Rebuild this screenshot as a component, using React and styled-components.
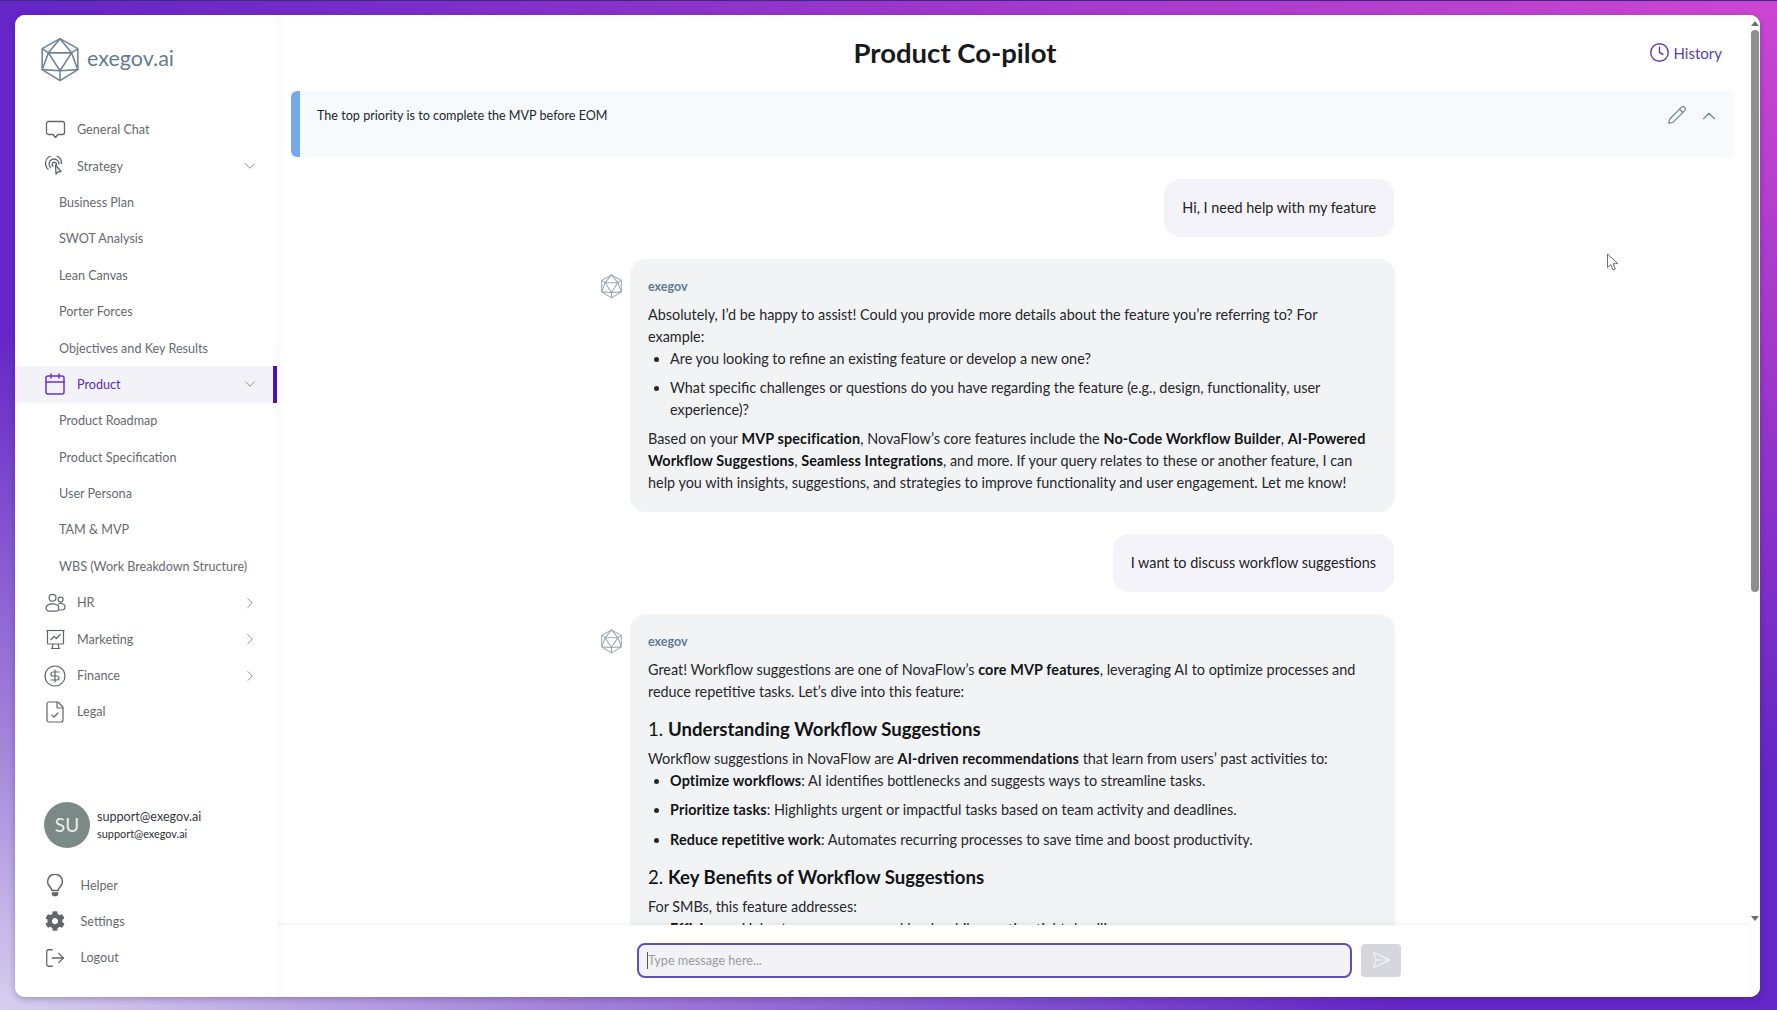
import React from 'react';
import styled, { createGlobalStyle } from 'styled-components';
import {
  ChevronDown, ChevronRight, ChevronUp, Clock, Pencil, SendHorizontal, Calendar,
  CircleDollarSign, FileCheck, LogOut,
} from 'lucide-react';
import { FaCog } from 'react-icons/fa';

const Global = createGlobalStyle`
  html, body { margin: 0; height: 100%; overflow: hidden; }
  body { font-family: Lato, "Open Sans", sans-serif; }
  * { box-sizing: border-box; }
`;

const Page = styled.div`
  width: 1777px;
  height: 1010px;
  padding: 14px 17px 13px 15px;
  background: #6426c6;
  position: relative;
  overflow: hidden;
  border-top: 1px solid #3a2a80;
  &::before {
    content: '';
    position: absolute;
    inset: 0;
    background: radial-gradient(ellipse 1750px 780px at 100% 0, #cc46d2 0%, rgba(190, 66, 205, 0.7) 42%, rgba(120, 40, 190, 0) 100%);
  }
  &::after {
    content: '';
    position: absolute;
    inset: 0;
    background: radial-gradient(ellipse 1400px 680px at 0 100%, #d6cfee 0%, rgba(190, 170, 225, 0.7) 40%, rgba(130, 90, 200, 0) 100%);
  }
`;

const Window = styled.div`
  position: relative;
  z-index: 1;
  height: 100%;
  display: flex;
  background: #fff;
  border-radius: 10px;
  overflow: hidden;
  box-shadow: 0 2px 6px rgba(40, 20, 90, 0.3);
`;

const Sidebar = styled.aside`
  width: 262px;
  flex-shrink: 0;
  display: flex;
  flex-direction: column;
  background: #fff;
  box-shadow: 2px 0 6px rgba(0, 0, 0, 0.04);
  z-index: 2;
`;

const Brand = styled.div`
  height: 96.5px;
  padding: 22px 0 0 24px;
  display: flex;
  align-items: flex-start;
  gap: 6px;
`;

const BrandName = styled.span`
  margin-top: 8px;
  font-size: 21.5px;
  color: #5f7c94;
`;

const Nav = styled.nav`
  display: flex;
  flex-direction: column;
  flex: 1;
`;

const NavRow = styled.div`
  height: 36.4px;
  display: flex;
  align-items: center;
  padding-left: ${(p) => (p.$sub ? '44px' : '28px')};
  padding-right: 18px;
  gap: ${(p) => (p.$foot ? '13.5px' : '10px')};
  font-size: 12.6px;
  color: ${(p) => (p.$active ? '#5a2bb8' : '#666a70')};
  background: ${(p) => (p.$active ? '#f3f2f9' : 'transparent')};
  box-shadow: ${(p) => (p.$active ? 'inset -4px 0 0 #4c12b0' : 'none')};
`;

const IconSlot = styled.span`
  width: 24px;
  height: 24px;
  flex-shrink: 0;
  display: flex;
  align-items: center;
  justify-content: center;
  color: #62666c;
`;

const NavLabel = styled.span`
  flex: 1;
  white-space: nowrap;
`;

const Profile = styled.div`
  display: flex;
  align-items: center;
  gap: 7px;
  padding: 0 0 0 29px;
  margin-bottom: 19px;
`;

const Avatar = styled.div`
  width: 46px;
  height: 46px;
  border-radius: 50%;
  background: #7c8a87;
  color: #e9eeec;
  font-size: 19px;
  display: flex;
  align-items: center;
  justify-content: center;
`;

const ProfileText = styled.div`
  display: flex;
  flex-direction: column;
  gap: 3px;
`;

const ProfileName = styled.span`
  font-size: 12.6px;
  color: #33373c;
`;

const ProfileMail = styled.span`
  font-size: 10.9px;
  color: #2b2f33;
`;

const FootLinks = styled.div`
  padding-bottom: 21px;
`;

const Main = styled.main`
  flex: 1;
  min-width: 0;
  display: flex;
  flex-direction: column;
`;

const Header = styled.header`
  height: 76px;
  flex-shrink: 0;
  position: relative;
  display: flex;
  justify-content: center;
  padding: 21px 116px 0 0;
`;

const Title = styled.h1`
  margin: 0;
  font-size: 27.5px;
  font-weight: 700;
  line-height: 34px;
  color: #17191c;
`;

const HistoryLink = styled.a`
  position: absolute;
  right: 27px;
  top: 27px;
  display: flex;
  align-items: center;
  gap: 4px;
  font-size: 15px;
  color: #5b3ea8;
`;

const Note = styled.div`
  flex-shrink: 0;
  height: 66px;
  margin: 0 16px 0 14px;
  padding: 15px 13px 0 17px;
  display: flex;
  justify-content: space-between;
  background: #f6fafd;
  border-left: 9px solid #75a9ee;
  border-radius: 6px 0 0 6px;
  font-size: 12.6px;
  color: #24272b;
`;

const NoteText = styled.span`
  line-height: 20px;
`;

const NoteTools = styled.div`
  display: flex;
  gap: 11px;
  height: 22px;
  margin-top: -1px;
  color: #6c8296;
`;

const Thread = styled.div`
  flex: 1;
  min-height: 0;
  overflow: hidden;
  display: flex;
  flex-direction: column;
  gap: 22px;
  padding: 22px 0 0 323px;
`;

const UserBubble = styled.div`
  align-self: flex-start;
  margin-left: auto;
  margin-right: 355px;
  padding: 18px 18px;
  border-radius: 16px;
  background: #f4f3f9;
  font-size: 14.4px;
  line-height: 22px;
  color: #1f2226;
`;

const BotRow = styled.div`
  display: flex;
  width: 795px;
  gap: 6px;
`;

const BotIcon = styled.div`
  width: 24px;
  flex-shrink: 0;
  padding-top: 15px;
`;

const BotBubble = styled.div`
  flex: 1;
  padding: 18px 18px 18px;
  border-radius: 16px;
  background: #f2f3f5;
  font-size: 14.4px;
  line-height: 21.8px;
  color: #25282c;
  strong { font-weight: 700; color: #111316; letter-spacing: 0.12px; }
`;

const Sender = styled.div`
  font-size: 12.5px;
  font-weight: 700;
  color: #5f7c94;
  line-height: 20px;
  margin-bottom: 7px;
`;

const Para = styled.p`
  margin: 0;
`;

const Bullets = styled.ul`
  margin: 0 0 8px;
  padding-left: 22px;
  li { margin-bottom: 7.4px; }
  li:last-child { margin-bottom: 0; }
`;

const Heading = styled.h3`
  margin: 14px 0 6px;
  font-size: 18.6px;
  line-height: 26px;
  font-weight: 400;
  color: #111316;
  strong { letter-spacing: 0; }
`;

const Composer = styled.div`
  flex-shrink: 0;
  height: 72px;
  display: flex;
  align-items: center;
  gap: 9px;
  padding: 0 0 2px 360px;
  background: #fff;
  box-shadow: 0 -2px 5px rgba(0, 0, 0, 0.05);
  position: relative;
`;

const InputBox = styled.div`
  width: 715px;
  height: 35px;
  padding: 0 8px;
  display: flex;
  align-items: center;
  background: #f3f3f6;
  border: 2px solid #5f50b8;
  border-radius: 8px;
  font-size: 12.6px;
  color: #9a9ca3;
`;

const Caret = styled.span`
  width: 1px;
  height: 17px;
  background: #555;
`;

const SendButton = styled.button`
  width: 40px;
  height: 33px;
  padding: 0;
  border: 0;
  border-radius: 4px;
  background: #d5d7dc;
  color: #f3f4f6;
  display: flex;
  align-items: center;
  justify-content: center;
`;

const ScrollRail = styled.div`
  width: 11px;
  flex-shrink: 0;
  display: flex;
  flex-direction: column;
  align-items: center;
  padding: 6px 1px 0;
  background: #fff;
`;

const ThumbBar = styled.div`
  width: 8px;
  height: 562px;
  margin-top: 4px;
  border-radius: 4px;
  background: #8f8f8f;
`;

const Spacer = styled.div`
  flex: 1;
`;

const Arrow = styled.div`
  width: 0;
  height: 0;
  border-left: 4px solid transparent;
  border-right: 4px solid transparent;
  ${(p) => (p.$down ? 'border-top: 5px solid #6e6e6e;' : 'border-bottom: 5px solid #6e6e6e;')}
  margin-bottom: ${(p) => (p.$down ? '76px' : '0')};
`;

const PointerMark = styled.svg`
  position: absolute;
  left: 1606px;
  top: 252px;
  z-index: 3;
`;

const Poly = ({ size = 42, color = '#6d8498', width = 1.5 }) => (
  <svg width={size} height={size * 1.08} viewBox="0 0 40 43" fill="none" stroke={color} strokeWidth={width} strokeLinejoin="round">
    <path d="M20 1.5 L37 11 L37 31 L20 41.5 L3 31 L3 11 Z" />
    <path d="M20 1.5 L31 15 L9 15 Z M9 15 L20 32 L31 15 M9 15 L3 31 M31 15 L37 31 M20 32 V41.5 M3 31 L20 32 L37 31 M3 11 L9 15 M37 11 L31 15" />
  </svg>
);

const StrategyIcon = () => (
  <svg width="20" height="20" viewBox="0 0 20 20" fill="none" stroke="currentColor" strokeWidth="1.3">
    <path d="M3.5 13.5a8 8 0 1 1 13-5.5" />
    <path d="M6 12a5 5 0 1 1 8-3.5" />
    <path d="M8.5 10.5a2.2 2.2 0 1 1 3-1.5" />
    <path d="M10.5 9 L11 18 L13 15.8 L16 15.5 Z" strokeLinejoin="round" />
  </svg>
);

const ChatIcon = () => (
  <svg width="21" height="20" viewBox="0 0 21 20" fill="none" stroke="currentColor" strokeWidth="1.3" strokeLinejoin="round">
    <path d="M3.5 1.5h14a2 2 0 0 1 2 2v9a2 2 0 0 1-2 2H13l-2.5 3-2.5-3H3.5a2 2 0 0 1-2-2v-9a2 2 0 0 1 2-2Z" />
  </svg>
);

const PeopleIcon = () => (
  <svg width="21" height="20" viewBox="0 0 21 20" fill="none" stroke="currentColor" strokeWidth="1.2">
    <circle cx="7.5" cy="4.8" r="3.4" />
    <circle cx="15.6" cy="6.6" r="2.5" />
    <path d="M4.5 18.2h6a3.4 3.4 0 0 0 3.4-3.2c0-2.4-2.8-4.2-6.4-4.2S1 12.600 1 15a3.200 3.200 0 0 0 3.500 3.200Z" />
    <path d="M13 11.300c.8-.5 1.800-.8 2.800-.8 2.400 0 4.200 1.500 4.200 3.500s-1.500 3-3.500 3h-3" />
  </svg>
);

const BoardIcon = () => (
  <svg width="21" height="21" viewBox="0 0 21 21" fill="none" stroke="currentColor" strokeWidth="1.2" strokeLinejoin="round">
    <path d="M1.500 1.500h18" />
    <path d="M2.500 1.500v12.500a1 1 0 0 0 1 1h14a1 1 0 0 0 1-1V1.500" />
    <path d="M5.500 11l3.500-3.500 2.500 2 4-4.500" />
    <path d="M8 15l-1 4.500M13 15l1 4.500M6 19.500h9" />
  </svg>
);

const BulbIcon = () => (
  <svg width="20" height="23" viewBox="0 0 20 23" fill="none" stroke="currentColor" strokeWidth="1.5">
    <path d="M7 16.500c0-2.500-4.500-4.500-4.500-8.800a7.500 7.500 0 0 1 15 0c0 4.300-4.500 6.300-4.500 8.800Z" strokeLinejoin="round" />
    <path d="M7 18.500h6v1.500a2 2 0 0 1-2 2H9a2 2 0 0 1-2-2Z" fill="currentColor" strokeWidth="0.6" />
  </svg>
);

const mainLinks = [
  { label: 'General Chat', icon: <ChatIcon /> },
  { label: 'Strategy', icon: <StrategyIcon />, chevron: 'down' },
  { label: 'Business Plan', sub: true },
  { label: 'SWOT Analysis', sub: true },
  { label: 'Lean Canvas', sub: true },
  { label: 'Porter Forces', sub: true },
  { label: 'Objectives and Key Results', sub: true },
  { label: 'Product', icon: <Calendar size={24} strokeWidth={1.5} color="#6a35c4" />, chevron: 'down', active: true },
  { label: 'Product Roadmap', sub: true },
  { label: 'Product Specification', sub: true },
  { label: 'User Persona', sub: true },
  { label: 'TAM & MVP', sub: true },
  { label: 'WBS (Work Breakdown Structure)', sub: true },
  { label: 'HR', icon: <PeopleIcon />, chevron: 'right' },
  { label: 'Marketing', icon: <BoardIcon />, chevron: 'right' },
  { label: 'Finance', icon: <CircleDollarSign size={24} strokeWidth={1.2} />, chevron: 'right' },
  { label: 'Legal', icon: <FileCheck size={24} strokeWidth={1.2} /> },
];

const footLinks = [
  { label: 'Helper', icon: <BulbIcon />, foot: true },
  { label: 'Settings', icon: <FaCog size={20} />, foot: true },
  { label: 'Logout', icon: <LogOut size={22} strokeWidth={1.4} />, foot: true },
];

const NavItem = ({ item }) => (
  <NavRow $sub={item.sub} $active={item.active} $foot={item.foot}>
    {item.icon && <IconSlot>{item.icon}</IconSlot>}
    <NavLabel>{item.label}</NavLabel>
    {item.chevron === 'down' && <ChevronDown size={18} strokeWidth={1.3} color="#8b8f94" />}
    {item.chevron === 'right' && <ChevronRight size={18} strokeWidth={1.3} color="#8b8f94" />}
  </NavRow>
);

const App = () => (
  <Page>
    <Global />
    <Window>
      <Sidebar>
        <Brand>
          <Poly />
          <BrandName>exegov.ai</BrandName>
        </Brand>
        <Nav>
          {mainLinks.map((item) => (
            <NavItem key={item.label} item={item} />
          ))}
          <Spacer />
          <Profile>
            <Avatar>SU</Avatar>
            <ProfileText>
              <ProfileName>support@exegov.ai</ProfileName>
              <ProfileMail>support@exegov.ai</ProfileMail>
            </ProfileText>
          </Profile>
          <FootLinks>
            {footLinks.map((item) => (
              <NavItem key={item.label} item={item} />
            ))}
          </FootLinks>
        </Nav>
      </Sidebar>
      <Main>
        <Header>
          <Title>Product Co-pilot</Title>
          <HistoryLink>
            <Clock size={21} strokeWidth={1.6} />
            History
          </HistoryLink>
        </Header>
        <Note>
          <NoteText>The top priority is to complete the MVP before EOM</NoteText>
          <NoteTools>
            <Pencil size={20} strokeWidth={1.4} />
            <ChevronUp size={22} strokeWidth={1.2} />
          </NoteTools>
        </Note>
        <Thread>
          <UserBubble>Hi, I need help with my feature</UserBubble>
          <BotRow>
            <BotIcon><Poly size={23} color="#97a6b3" width={1.8} /></BotIcon>
            <BotBubble>
              <Sender>exegov</Sender>
              <Para>Absolutely, I’d be happy to assist! Could you provide more details about the feature you’re referring to? For example:</Para>
              <Bullets>
                <li>Are you looking to refine an existing feature or develop a new one?</li>
                <li>What specific challenges or questions do you have regarding the feature (e.g., design, functionality, user experience)?</li>
              </Bullets>
              <Para>
                Based on your <strong>MVP specification</strong>, NovaFlow’s core features include the <strong>No-Code Workflow Builder</strong>, <strong>AI-Powered Workflow Suggestions</strong>, <strong>Seamless Integrations</strong>, and more. If your query relates to these or another feature, I can help you with insights, suggestions, and strategies to improve functionality and user engagement. Let me know!
              </Para>
            </BotBubble>
          </BotRow>
          <UserBubble>I want to discuss workflow suggestions</UserBubble>
          <BotRow>
            <BotIcon><Poly size={23} color="#97a6b3" width={1.8} /></BotIcon>
            <BotBubble>
              <Sender>exegov</Sender>
              <Para>Great! Workflow suggestions are one of NovaFlow’s <strong>core MVP features</strong>, leveraging AI to optimize processes and reduce repetitive tasks. Let’s dive into this feature:</Para>
              <Heading>1. <strong>Understanding Workflow Suggestions</strong></Heading>
              <Para>Workflow suggestions in NovaFlow are <strong>AI-driven recommendations</strong> that learn from users’ past activities to:</Para>
              <Bullets>
                <li><strong>Optimize workflows</strong>: AI identifies bottlenecks and suggests ways to streamline tasks.</li>
                <li><strong>Prioritize tasks</strong>: Highlights urgent or impactful tasks based on team activity and deadlines.</li>
                <li><strong>Reduce repetitive work</strong>: Automates recurring processes to save time and boost productivity.</li>
              </Bullets>
              <Heading>2. <strong>Key Benefits of Workflow Suggestions</strong></Heading>
              <Para>For SMBs, this feature addresses:</Para>
              <Bullets>
                <li><strong>Efficiency</strong>: Helps teams manage workloads while meeting tight deadlines.</li>
              </Bullets>
            </BotBubble>
          </BotRow>
        </Thread>
        <Composer>
          <InputBox>
            <Caret />
            Type message here...
          </InputBox>
          <SendButton><SendHorizontal size={20} strokeWidth={1.4} /></SendButton>
        </Composer>
      </Main>
      <ScrollRail>
        <Arrow />
        <ThumbBar />
        <Spacer />
        <Arrow $down />
      </ScrollRail>
    </Window>
    <PointerMark width="14" height="20" viewBox="0 0 14 20" fill="#fff" stroke="#6d7276" strokeWidth="1">
      <path d="M1.5 1 L1.5 14.5 L4.8 11.6 L7 17 L9.4 16 L7.2 10.8 L11.8 10.6 Z" />
    </PointerMark>
  </Page>
);

export default App;
